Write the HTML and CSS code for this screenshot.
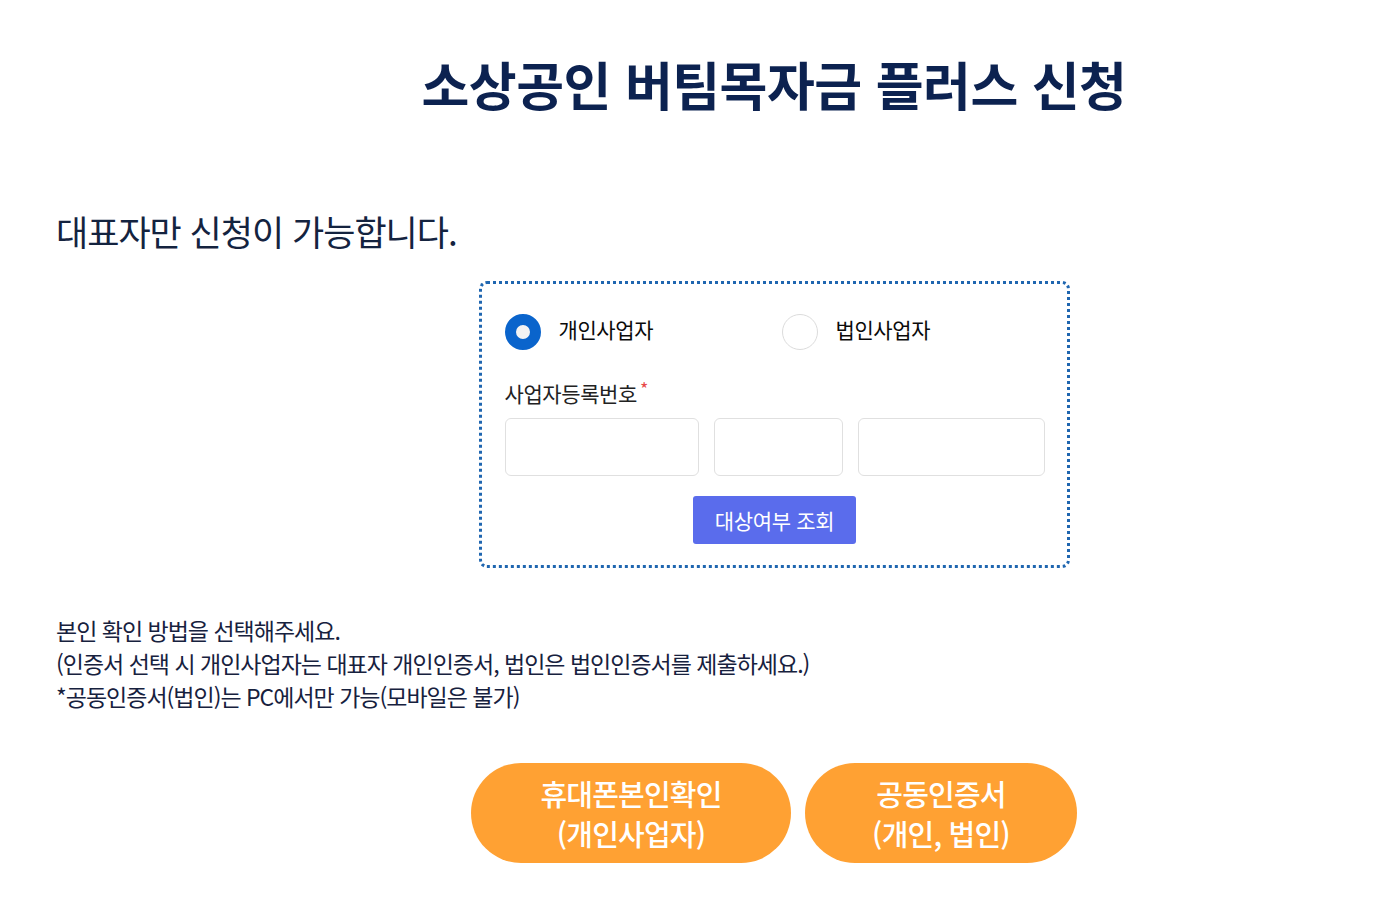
FILE: index.html
```html
<!DOCTYPE html>
<html lang="ko">
<head>
<meta charset="utf-8">
<title>소상공인 버팀목자금 플러스 신청</title>
<link rel="stylesheet" href="styles.css">
</head>
<body>
<div class="page">
  <div class="center-row">
    <h1 class="title">소상공인 버팀목자금 플러스 신청</h1>
  </div>
  <p class="subtitle">대표자만 신청이 가능합니다.</p>
  <div class="center-row">
    <div class="form-box">
      <div class="radio-row">
        <label class="radio-opt">
          <span class="radio checked"></span>
          <span class="radio-label">개인사업자</span>
        </label>
        <label class="radio-opt">
          <span class="radio"></span>
          <span class="radio-label">법인사업자</span>
        </label>
      </div>
      <div class="field-label">사업자등록번호<span class="req">*</span></div>
      <div class="inputs">
        <input class="inp inp-a" type="text">
        <input class="inp inp-b" type="text">
        <input class="inp inp-c" type="text">
      </div>
      <div class="btn-row">
        <button class="check-btn" type="button">대상여부 조회</button>
      </div>
    </div>
  </div>
  <div class="notice">
    <p>본인 확인 방법을 선택해주세요.</p>
    <p>(인증서 선택 시 개인사업자는 대표자 개인인증서, 법인은 법인인증서를 제출하세요.)</p>
    <p>*공동인증서(법인)는 PC에서만 가능(모바일은 불가)</p>
  </div>
  <div class="center-row">
    <div class="auth-btns">
      <button class="auth-btn auth-phone" type="button">휴대폰본인확인<br>(개인사업자)</button>
      <button class="auth-btn auth-cert" type="button">공동인증서<br>(개인, 법인)</button>
    </div>
  </div>
</div>
</body>
</html>
```

FILE: styles.css
```css
* { box-sizing: border-box; }
html, body { margin: 0; padding: 0; background: #fff; }
body {
  font-family: "Noto Sans CJK KR", "Noto Sans", sans-serif;
  color: #1b2540;
}
.page {
  padding-left: 56px;
  padding-top: 44px;
}
.center-row {
  width: 1381px;
  margin-left: -56px;
  padding-left: 167px;
  display: flex;
  justify-content: center;
}
.title {
  margin: 0;
  font-size: 52px;
  line-height: 80px;
  font-weight: 700;
  color: #0c2250;
  letter-spacing: -0.5px;
}
.subtitle {
  margin: 82px 0 0;
  font-size: 35px;
  line-height: 50px;
  font-weight: 400;
  color: #14233f;
  letter-spacing: -1px;
}
.form-box {
  margin-top: 25px;
  width: 591px;
  height: 287px;
  border: 3px dotted #1f66b0;
  border-radius: 8px;
  padding: 30px 22px 0 23px;
}
.radio-row {
  display: grid;
  grid-template-columns: 277px 1fr;
  height: 36px;
}
.radio-opt {
  display: flex;
  align-items: center;
  gap: 18px;
}
.radio {
  width: 36px;
  height: 36px;
  border-radius: 50%;
  border: 1px solid #dcdcdc;
  background: #fff;
  flex: none;
}
.radio.checked {
  border: 11px solid #0a64cc;
  background: #f3f3f3;
}
.radio-label {
  font-size: 21px;
  letter-spacing: -0.4px;
  color: #0a0a0a;
  position: relative;
  top: -3px;
}
.field-label {
  margin-top: 28px;
  font-size: 21px;
  line-height: 30px;
  letter-spacing: -0.4px;
  color: #222;
}
.req {
  color: #e84a4a;
  font-size: 18px;
  vertical-align: top;
  margin-left: 3px;
  position: relative;
  top: -5px;
}
.inputs {
  display: flex;
  gap: 15px;
  margin-top: 10px;
}
.inp {
  height: 58px;
  border: 1px solid #e0e0e0;
  border-radius: 6px;
  background: #fff;
  padding: 0 10px;
  font-size: 18px;
}
.inp-a { width: 194px; }
.inp-b { width: 129px; }
.inp-c { width: 187px; }
.btn-row {
  display: flex;
  justify-content: center;
  margin-top: 20px;
}
.check-btn {
  width: 163px;
  height: 48px;
  border: none;
  border-radius: 3px;
  background: #5a6cec;
  color: #fff;
  font-family: inherit;
  font-size: 21px;
  letter-spacing: -0.3px;
}
.notice {
  margin-top: 46px;
}
.notice p {
  margin: 0;
  font-size: 23px;
  line-height: 33px;
  letter-spacing: -1px;
  color: #17213e;
}
.auth-btns {
  display: flex;
  gap: 14px;
  margin-top: 50px;
}
.auth-btn {
  height: 100px;
  border: none;
  border-radius: 50px;
  background: #ffa133;
  color: #fff;
  font-family: inherit;
  font-size: 29px;
  line-height: 40px;
  font-weight: 500;
  letter-spacing: -0.8px;
}
.auth-phone { width: 320px; }
.auth-cert { width: 272px; }
```
